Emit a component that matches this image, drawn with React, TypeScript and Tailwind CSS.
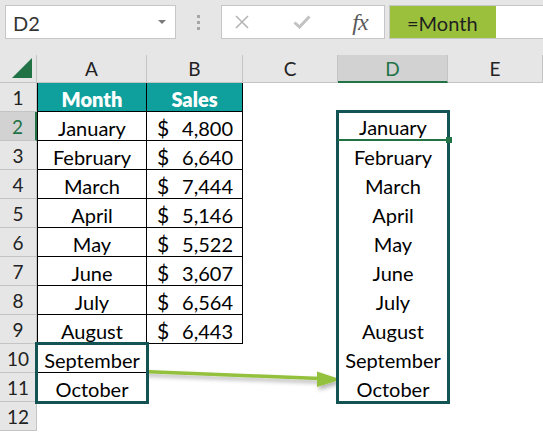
import React from "react";

const months = [
  "January",
  "February",
  "March",
  "April",
  "May",
  "June",
  "July",
  "August",
  "September",
  "October",
];

const sales = ["4,800", "6,640", "7,444", "5,146", "5,522", "3,607", "6,564", "6,443"];

const rowNums = [1, 2, 3, 4, 5, 6, 7, 8, 9, 10, 11, 12];

const colHead =
  "h-[28px] flex items-center justify-center pt-[2px] border-r border-b border-[#c4c4c4] bg-[#e6e6e6] text-[19px] text-[#222]";
const cell = "h-[29px] flex items-center justify-center pt-[3px]";

function FormulaBar() {
  return (
    <div className="h-[55px] bg-[#e6e6e6] flex items-start pt-[5px]">
      {/* name box */}
      <div className="ml-[5px] w-[171px] h-[34px] bg-white border border-[#c6c6c6] flex items-center justify-between pl-[7px] pr-[9px]">
        <span className="text-[20px] text-[#333] pt-[2px]">D2</span>
        <svg width="8" height="5" viewBox="0 0 8 5">
          <path d="M0 0 L8 0 L4 4 Z" fill="#7a7a7a" />
        </svg>
      </div>
      {/* grip dots */}
      <div className="w-[45px] h-[34px] flex flex-col items-center justify-center gap-[3px]">
        <span className="w-[3px] h-[3px] bg-[#a6a6a6]" />
        <span className="w-[3px] h-[3px] bg-[#a6a6a6]" />
        <span className="w-[3px] h-[3px] bg-[#a6a6a6]" />
      </div>
      {/* cancel / enter / fx */}
      <div className="w-[164px] h-[34px] bg-white border border-[#c6c6c6] flex items-center">
        <div className="w-[40px] flex justify-center">
          <svg width="14" height="14" viewBox="0 0 14 14">
            <path d="M1 1 L13 13 M13 1 L1 13" stroke="#b5b5b5" strokeWidth="1.6" />
          </svg>
        </div>
        <div className="w-[80px] flex justify-center">
          <svg width="18" height="14" viewBox="0 0 18 14">
            <path d="M1.5 7.5 L6.5 12 L16.5 1.5" stroke="#c2c2c2" strokeWidth="3" fill="none" />
          </svg>
        </div>
        <div className="flex-1 flex justify-center pr-[6px]">
          <span className="text-[24px] italic text-[#5a5a5a] font-['Liberation_Serif',serif] leading-none tracking-[-1px]">
            fx
          </span>
        </div>
      </div>
      {/* formula input */}
      <div className="ml-[4px] flex-1 h-[34px] bg-white border border-r-0 border-[#c6c6c6] flex">
        <div className="w-[106px] h-full bg-[#9bc13c] flex items-center pl-[17px] pt-[2px] text-[20px] text-[#1f1f1f]">
          =Month
        </div>
      </div>
    </div>
  );
}

function RowHeaders() {
  return (
    <div className="w-[37px] flex flex-col">
      <div className="h-[28px] bg-[#e6e6e6] border-r border-b border-[#c4c4c4] flex items-end justify-end p-[4px]">
        <svg width="20" height="20" viewBox="0 0 20 20">
          <path d="M20 0 L20 20 L0 20 Z" fill="#217346" />
        </svg>
      </div>
      {rowNums.map((n) =>
        n === 2 ? (
          <div
            key={n}
            className="h-[29px] flex items-center justify-center pt-[3px] bg-[#d2d2d2] border-b border-[#c4c4c4] border-r-2 border-r-[#217346] text-[19px] text-[#217346]"
          >
            {n}
          </div>
        ) : (
          <div
            key={n}
            className="h-[29px] flex items-center justify-center pt-[3px] bg-[#e6e6e6] border-r border-b border-[#c4c4c4] text-[19px] text-[#222]"
          >
            {n}
          </div>
        )
      )}
    </div>
  );
}

function ColumnA() {
  return (
    <div className="w-[110px] flex flex-col">
      <div className={colHead}>A</div>
      <div className={`${cell} bg-[#0fa09d] text-white font-extrabold border-l border-r border-b border-black`}>
        Month
      </div>
      {months.slice(0, 8).map((m) => (
        <div key={m} className={`${cell} border-l border-r border-b border-black`}>
          {m}
        </div>
      ))}
      <div className="relative z-10 h-[58px] flex flex-col bg-white outline-3 outline-[#135354] -outline-offset-1">
        <div className={`${cell} border-b border-black`}>September</div>
        <div className={cell}>October</div>
      </div>
      <div className="h-[29px]" />
    </div>
  );
}

function ColumnB() {
  return (
    <div className="w-[96px] flex flex-col">
      <div className={colHead}>B</div>
      <div className={`${cell} bg-[#0fa09d] text-white font-extrabold border-r border-b border-black`}>
        Sales
      </div>
      {sales.map((s) => (
        <div
          key={s}
          className="h-[29px] flex items-center justify-between pt-[3px] pl-[10px] pr-[9px] border-r border-b border-black"
        >
          <span className="text-[21px]">$</span>
          <span>{s}</span>
        </div>
      ))}
    </div>
  );
}

function ColumnD() {
  return (
    <div className="w-[110px] flex flex-col">
      <div className="h-[28px] flex items-center justify-center pt-[2px] border-r border-[#c4c4c4] border-b-2 border-b-[#217346] bg-[#d2d2d2] text-[19px] text-[#217346]">
        D
      </div>
      <div className="h-[29px]" />
      <div className="relative z-10 h-[290px] flex flex-col bg-white outline-3 outline-[#135354] -outline-offset-1">
        {months.map((m, i) =>
          i === 0 ? (
            <div key={m} className={`${cell} relative border-b-2 border-[#217346]`}>
              {m}
              <span className="absolute right-[-4px] bottom-[-4px] w-[6px] h-[6px] bg-[#217346]" />
            </div>
          ) : (
            <div key={m} className={cell}>
              {m}
            </div>
          )
        )}
      </div>
    </div>
  );
}

function Arrow() {
  return (
    <svg className="absolute left-0 top-0 pointer-events-none" width="543" height="432" viewBox="0 0 543 432">
      <defs>
        <filter id="sh" x="-10%" y="-50%" width="120%" height="200%">
          <feDropShadow dx="2" dy="3" stdDeviation="2" floodColor="#000" floodOpacity="0.3" />
        </filter>
      </defs>
      <g filter="url(#sh)">
        <line x1="143" y1="371.5" x2="320" y2="378.5" stroke="#94c13c" strokeWidth="3.5" />
        <path d="M317 371.5 L341 379.5 L317 387 Z" fill="#94c13c" />
      </g>
    </svg>
  );
}

export default function App() {
  return (
    <div className="relative w-[543px] h-[432px] overflow-hidden bg-white font-['Lato',sans-serif] text-[20px] text-black">
      <FormulaBar />
      <div className="flex">
        <RowHeaders />
        <ColumnA />
        <ColumnB />
        <div className="w-[95px] flex flex-col">
          <div className={colHead}>C</div>
        </div>
        <ColumnD />
        <div className="flex-1 flex flex-col">
          <div className={colHead}>E</div>
        </div>
      </div>
      <Arrow />
    </div>
  );
}
